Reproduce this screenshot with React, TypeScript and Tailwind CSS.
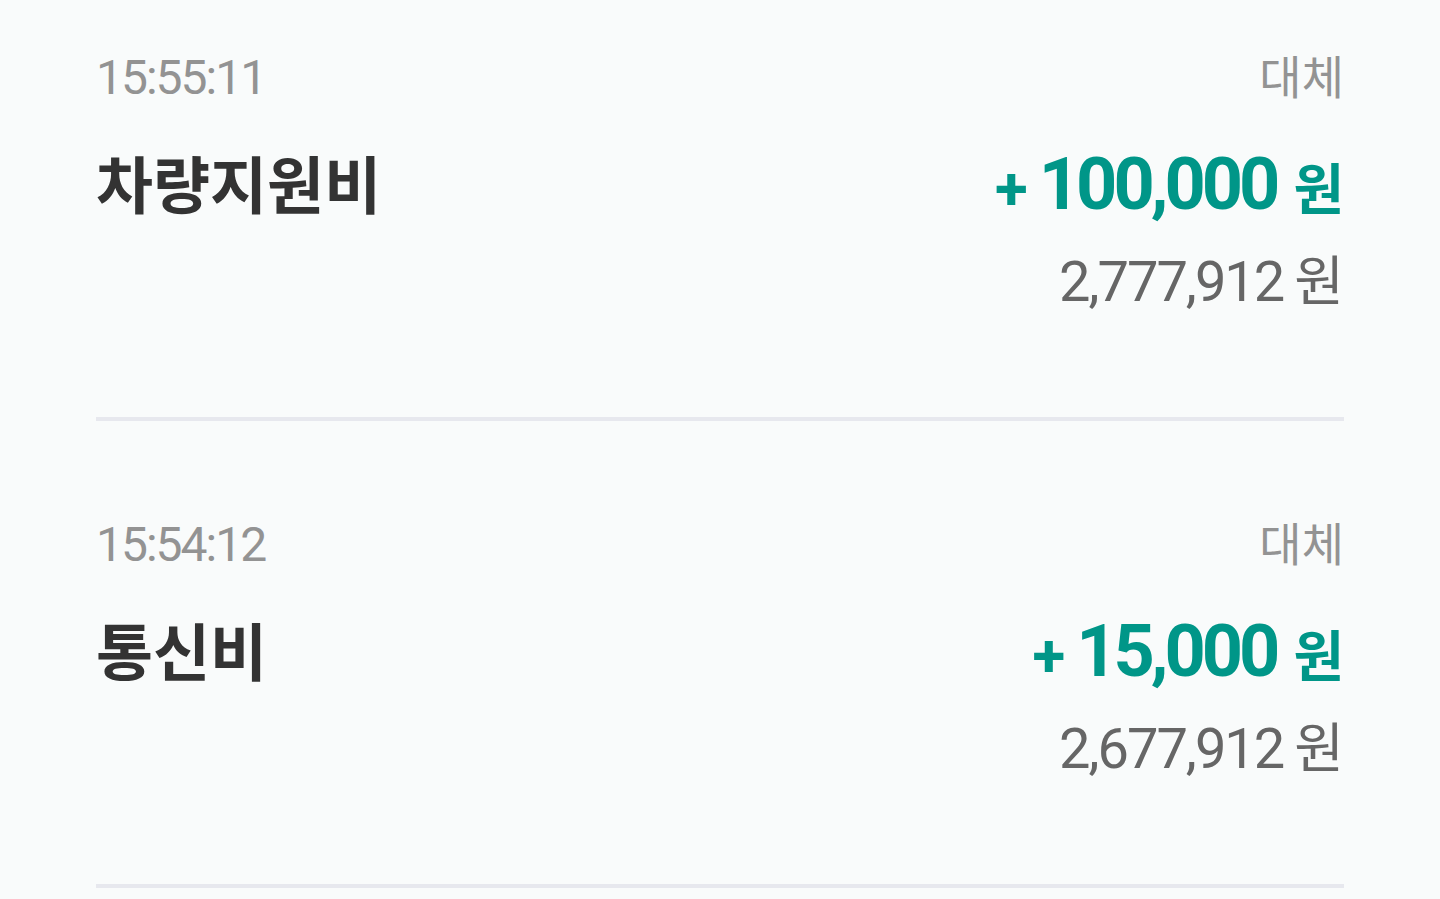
import React from "react";

const FONT = { fontFamily: "Roboto, 'Noto Sans CJK KR', sans-serif" };

type Item = { time: string; title: string; amount: string; balance: string; kind: string };

const items: Item[] = [
  { time: "15:55:11", title: "차량지원비", amount: "100,000", balance: "2,777,912", kind: "대체" },
  { time: "15:54:12", title: "통신비", amount: "15,000", balance: "2,677,912", kind: "대체" },
];

function Row({ item }: { item: Item }) {
  return (
    <div className="pt-[100px] pb-[107px] border-b-4 border-[#e7e8ee]">
      <div className="flex justify-between items-baseline h-[48px] text-[48px] leading-[48px] text-[#939393]">
        <span className="tracking-[-2px]">{item.time}</span>
        <span className="text-[46px] leading-none">{item.kind}</span>
      </div>
      <div className="mt-[47px] flex justify-between items-baseline h-[72px] leading-[72px]">
        <span className="text-[62px] font-bold text-[#333333]">{item.title}</span>
        <span className="text-[72px] font-bold text-[#009688]">
          <span className="text-[60px] leading-none mr-[11px]">+</span>
          <span className="leading-none tracking-[-4px]">{item.amount}</span>
          <span className="text-[55px] leading-none ml-[17px]">원</span>
        </span>
      </div>
      <div className="mt-[33px] flex justify-end items-baseline h-[56px] text-[56px] leading-[56px] text-[#666666]">
        <span className="tracking-[-2px]">{item.balance}</span>
        <span className="text-[54px] leading-none ml-[11px]">원</span>
      </div>
    </div>
  );
}

export default function App() {
  return (
    <div className="w-[1440px] h-[899px] overflow-hidden bg-[#f9fbfb]" style={FONT}>
      <div className="-mt-[46px] px-[96px]">
        {items.map((it) => (
          <Row key={it.time} item={it} />
        ))}
      </div>
    </div>
  );
}
